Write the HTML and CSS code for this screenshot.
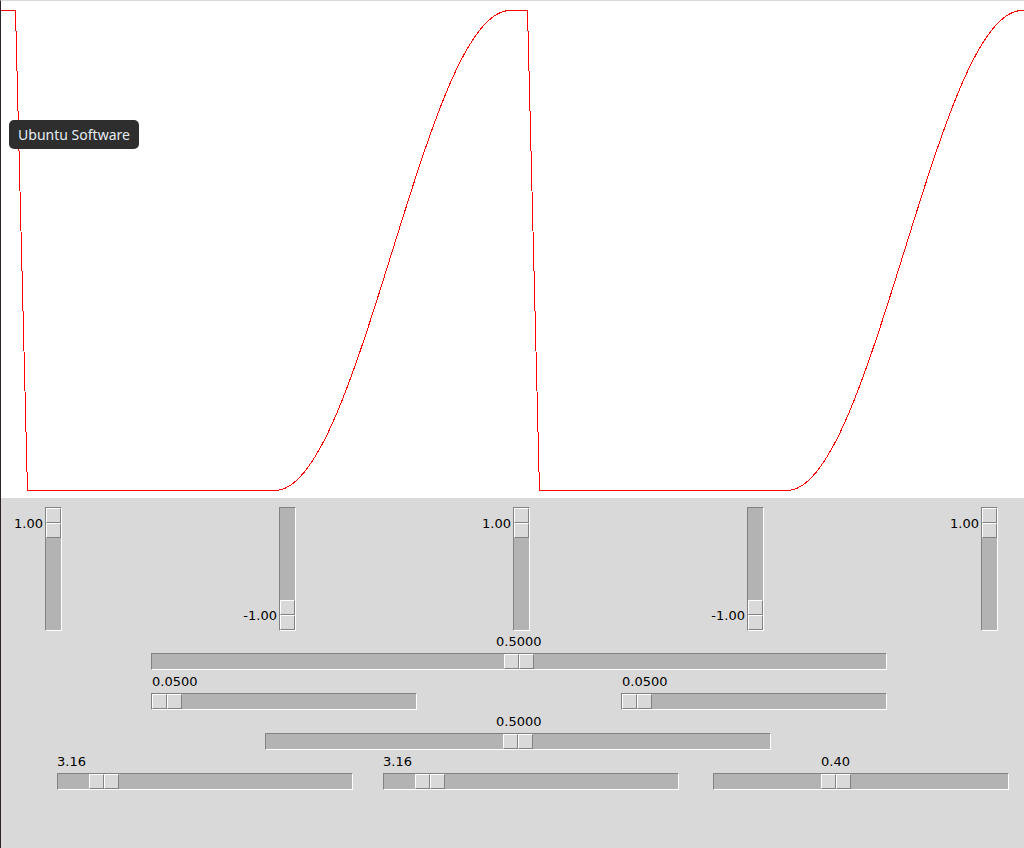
FILE: index.html
```html
<!DOCTYPE html>
<html>
<head>
<meta charset="utf-8">
<title>Waveform</title>
<link rel="stylesheet" href="styles.css">
</head>
<body>
<div class="window">
  <div class="canvas">
    <svg class="plot" width="1023" height="497" viewBox="1 1 1023 497">
      <path d="M1,10.5 H15.5 L27.5,490.5 H275 C317.5,490.5 354.2,373.5 392.5,250.5 S467.5,10.5 510,10.5 H527.5 L539.5,490.5 H787 C829.5,490.5 866.2,373.5 904.5,250.5 S979.5,10.5 1022,10.5 H1024" fill="none" stroke="#ff0000" stroke-width="1"/>
    </svg>
    <div class="tooltip">Ubuntu Software</div>
  </div>
  <div class="panel">
    <div class="vrow">
      <div class="vscale">
        <div class="vlabel">1.00</div>
        <div class="vtrough"><div class="vthumb" style="top:0px"><span></span><span></span></div></div>
      </div>
      <div class="vscale">
        <div class="vlabel bottom">-1.00</div>
        <div class="vtrough"><div class="vthumb" style="top:92px"><span></span><span></span></div></div>
      </div>
      <div class="vscale">
        <div class="vlabel">1.00</div>
        <div class="vtrough"><div class="vthumb" style="top:0px"><span></span><span></span></div></div>
      </div>
      <div class="vscale">
        <div class="vlabel bottom">-1.00</div>
        <div class="vtrough"><div class="vthumb" style="top:92px"><span></span><span></span></div></div>
      </div>
      <div class="vscale">
        <div class="vlabel">1.00</div>
        <div class="vtrough"><div class="vthumb" style="top:0px"><span></span><span></span></div></div>
      </div>
    </div>

    <div class="hrow row1">
      <div class="hscale w736">
        <div class="hlabel"><span style="margin-left:345px">0.5000</span></div>
        <div class="htrough"><div class="hthumb" style="left:352px"><span></span><span></span></div></div>
      </div>
    </div>

    <div class="hrow row2">
      <div class="hscale w266">
        <div class="hlabel"><span style="margin-left:1px">0.0500</span></div>
        <div class="htrough"><div class="hthumb" style="left:0px"><span></span><span></span></div></div>
      </div>
      <div class="hscale w266 gap204">
        <div class="hlabel"><span style="margin-left:1px">0.0500</span></div>
        <div class="htrough"><div class="hthumb" style="left:0px"><span></span><span></span></div></div>
      </div>
    </div>

    <div class="hrow row3">
      <div class="hscale w506">
        <div class="hlabel"><span style="margin-left:231px">0.5000</span></div>
        <div class="htrough"><div class="hthumb" style="left:237px"><span></span><span></span></div></div>
      </div>
    </div>

    <div class="hrow row4">
      <div class="hscale w296">
        <div class="hlabel"><span style="margin-left:0px">3.16</span></div>
        <div class="htrough"><div class="hthumb" style="left:31px"><span></span><span></span></div></div>
      </div>
      <div class="hscale w296 gap30">
        <div class="hlabel"><span style="margin-left:0px">3.16</span></div>
        <div class="htrough"><div class="hthumb" style="left:31px"><span></span><span></span></div></div>
      </div>
      <div class="hscale w296 gap34">
        <div class="hlabel"><span style="margin-left:108px">0.40</span></div>
        <div class="htrough"><div class="hthumb" style="left:107px"><span></span><span></span></div></div>
      </div>
    </div>
  </div>
</div>
</body>
</html>
```

FILE: styles.css
```css
html, body {
  margin: 0;
  padding: 0;
  background: #d9d9d9;
}

.window {
  width: 1024px;
  height: 848px;
  box-sizing: border-box;
  border-top: 1px solid #dadada;
  border-left: 1px solid #2c2429;
  display: flex;
  flex-direction: column;
  font-family: "DejaVu Sans", sans-serif;
  font-size: 13px;
  color: #000;
}

.canvas {
  position: relative;
  height: 497px;
  background: #ffffff;
  flex: none;
}

.plot {
  display: block;
}

.plot path {
  shape-rendering: crispEdges;
}

.tooltip {
  position: absolute;
  left: 8px;
  top: 119px;
  width: 130px;
  height: 29px;
  box-sizing: border-box;
  border-radius: 5px;
  background: #2e2e2e;
  color: #e6ecf2;
  font-family: "Noto Sans", "Open Sans", sans-serif;
  font-size: 14px;
  line-height: 29px;
  text-align: center;
  white-space: nowrap;
}

.panel {
  flex: 1;
  background: #d9d9d9;
  padding-top: 9px;
  display: flex;
  flex-direction: column;
}

/* vertical scales */
.vrow {
  display: flex;
  gap: 173px;
  height: 124px;
}

.vscale {
  display: flex;
  width: 61px;
  height: 124px;
}

.vlabel {
  width: 44px;
  box-sizing: border-box;
  padding-right: 2px;
  text-align: right;
  height: 30px;
  line-height: 30px;
  margin-top: 2px;
  white-space: nowrap;
}

.vlabel.bottom {
  align-self: flex-end;
  margin-top: 0;
  margin-bottom: 0;
}

.vtrough {
  position: relative;
  width: 17px;
  height: 124px;
  box-sizing: border-box;
  background: #b3b3b3;
  border-style: solid;
  border-width: 1px;
  border-color: #828282 #ffffff #ffffff #828282;
}

.vthumb {
  position: absolute;
  left: 0;
  width: 15px;
  height: 30px;
  display: flex;
  flex-direction: column;
}

.vthumb span,
.hthumb span {
  flex: 1;
  box-sizing: border-box;
  background: #d9d9d9;
  border-style: solid;
  border-width: 1px;
  border-color: #ffffff #828282 #828282 #ffffff;
}

/* horizontal scales */
.hrow {
  display: flex;
  margin-top: 4px;
}

.row1 { margin-top: 3px; padding-left: 150px; }
.row2 { padding-left: 150px; }
.row3 { padding-left: 264px; }
.row4 { padding-left: 56px; }

.gap204 { margin-left: 204px; }
.gap30 { margin-left: 30px; }
.gap34 { margin-left: 34px; }

.w736 { width: 736px; }
.w266 { width: 266px; }
.w506 { width: 506px; }
.w296 { width: 296px; }

.hscale {
  display: flex;
  flex-direction: column;
}

.hlabel {
  height: 16px;
  line-height: 16px;
  white-space: nowrap;
  display: flex;
}

.htrough {
  position: relative;
  margin-top: 3px;
  height: 17px;
  box-sizing: border-box;
  background: #b3b3b3;
  border-style: solid;
  border-width: 1px;
  border-color: #828282 #ffffff #ffffff #828282;
}

.hthumb {
  position: absolute;
  top: 0;
  width: 30px;
  height: 15px;
  display: flex;
}
```
